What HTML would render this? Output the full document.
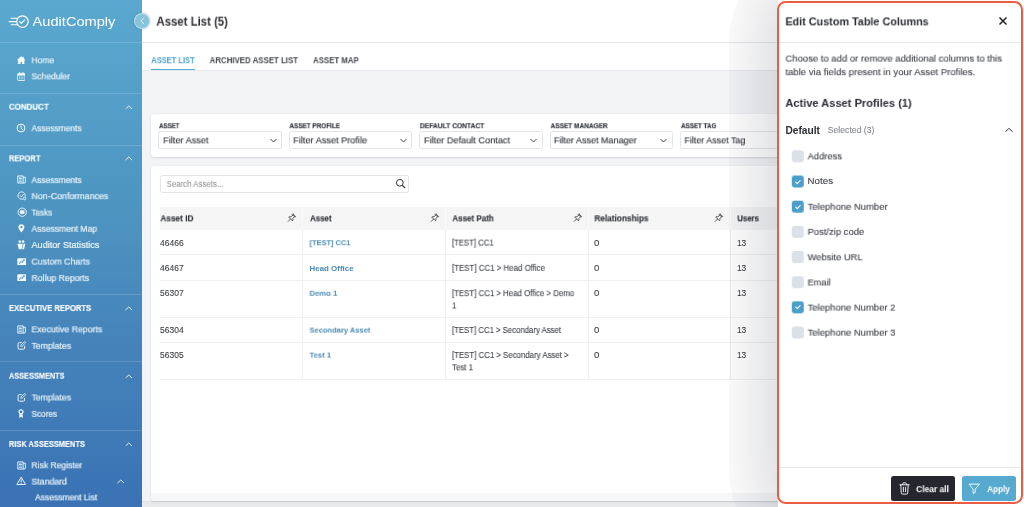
<!DOCTYPE html>
<html lang="en">
<head>
<meta charset="utf-8">
<title>Asset List</title>
<style>
*{box-sizing:border-box;margin:0;padding:0}
html,body{width:1024px;height:507px;overflow:hidden;background:#f3f4f6;font-family:"Liberation Sans",sans-serif;color:#333}
body{position:relative}
.abs{position:absolute}
.t{position:absolute;white-space:nowrap;transform-origin:0 50%;will-change:transform}
#side{position:absolute;left:0;top:0;width:142px;height:507px;background:linear-gradient(180deg,#5aa8cf 0%,#4d94c1 42%,#4583ba 68%,#3a72b4 100%)}
.hr{position:absolute;left:0;width:142px;height:1px;background:rgba(255,255,255,.15)}
.logo{font-size:13.6px;line-height:18px;color:#fff}
.it{font-size:9.1px;font-weight:normal;-webkit-text-stroke:0.22px #e9f3f9;line-height:12px;color:#e9f3f9}
.hd{font-size:8.7px;font-weight:bold;-webkit-text-stroke:0.15px #fff;line-height:10px;color:#fdfeff}
#top{position:absolute;left:142px;top:0;width:882px;height:43px;background:#fff;border-bottom:1px solid #e3e8ee}
.title{font-size:12.3px;font-weight:bold;line-height:16px;color:#2e2e33}
#tabs{position:absolute;left:142px;top:43px;width:882px;height:28px;background:#fff;border-bottom:1px solid #e6eaef}
.tab{font-size:8.5px;font-weight:bold;line-height:10px;color:#43464c}
.tab.on{color:#4a9fd0}
.card{position:absolute;background:#fff;border-radius:3px;box-shadow:0 1px 2px rgba(40,50,70,.13),0 0 1px rgba(40,50,70,.12)}
.fl{font-size:7.3px;font-weight:bold;line-height:8px;color:#33363c;-webkit-text-stroke:.15px #33363c}
.selbox{position:absolute;top:131px;height:17.5px;border:1px solid #e2e5ea;border-radius:2.5px;background:#fff}
.st{font-size:9.3px;line-height:12px;color:#303338;-webkit-text-stroke:.12px #303338}
.sr{font-size:8.45px;line-height:12px;color:#85888f}
.th{font-size:8.4px;font-weight:bold;line-height:12px;color:#2f3237;-webkit-text-stroke:.12px #2f3237}
.td{font-size:8.25px;line-height:12px;color:#3c3f45;-webkit-text-stroke:.1px #3c3f45}
.td.lk{-webkit-text-stroke:0;color:#4a8bb3;font-weight:bold;font-size:7.9px}
.rowline{position:absolute;left:160px;width:640px;height:1px;background:#eef0f2}
.colline{position:absolute;top:229px;width:1px;height:150px;background:#eff0f2}
.colh{position:absolute;top:207px;width:1px;height:22px;background:#fbfbfc}
#pclip{position:absolute;left:729px;top:0;width:295px;height:507px;overflow:hidden;clip-path:path('M7 507 C2.5 497 0 485 0 470 L0 46 C0 28 3.5 12 9.5 0 L295 0 L295 507 Z')}
#pbg{position:absolute;left:49px;top:-22px;width:300px;height:555px;background:#fff;box-shadow:0 0 80px rgba(10,14,28,.235)}
#panel{position:absolute;left:777px;top:1px;width:246px;height:503px;border:2px solid #ea5d43;border-radius:8.5px}
.pt{font-size:11.8px;font-weight:bold;line-height:14px;color:#2b2d33}
.pd{font-size:9.7px;line-height:12px;color:#3f4248;-webkit-text-stroke:.12px #3f4248}
.ph{font-size:11.6px;font-weight:bold;line-height:14px;color:#2b2d33}
.pdf{font-size:10px;font-weight:bold;line-height:12px;color:#2b2d33}
.psel{font-size:8.4px;line-height:10px;color:#84878d;-webkit-text-stroke:.1px #84878d}
.cb{position:absolute;left:791px;width:12px;height:12px;border-radius:2.4px;background:#dce1e9;will-change:transform}
.cb.on{background:#4b9fca}
.cl{font-size:9.56px;line-height:12px;color:#3a3d43;-webkit-text-stroke:.1px #3a3d43}
.bt{font-size:9px;font-weight:bold;line-height:12px;color:#fff}
</style>
</head>
<body>
<!-- main header -->
<div id="top"></div>
<div id="tabs"></div>
<div class="abs" style="left:151px;top:68.8px;width:44px;height:1.6px;background:#55a7d4"></div>

<!-- filter card -->
<div class="card" style="left:151px;top:114px;width:720px;height:43px"></div>
<div class="selbox" style="left:158px;width:124px"></div>
<div class="selbox" style="left:289px;width:123px"></div>
<div class="selbox" style="left:419px;width:124px"></div>
<div class="selbox" style="left:550px;width:123px"></div>
<div class="selbox" style="left:680px;width:124px"></div>
<svg class="abs" style="left:268.5px;top:137px" width="9" height="7" viewBox="0 0 9 7"><path d="M1.5 2 L4.5 5 L7.5 2" fill="none" stroke="#444" stroke-width="1"/></svg>
<svg class="abs" style="left:398.8px;top:137px" width="9" height="7" viewBox="0 0 9 7"><path d="M1.5 2 L4.5 5 L7.5 2" fill="none" stroke="#444" stroke-width="1"/></svg>
<svg class="abs" style="left:529.2px;top:137px" width="9" height="7" viewBox="0 0 9 7"><path d="M1.5 2 L4.5 5 L7.5 2" fill="none" stroke="#444" stroke-width="1"/></svg>
<svg class="abs" style="left:659.4px;top:137px" width="9" height="7" viewBox="0 0 9 7"><path d="M1.5 2 L4.5 5 L7.5 2" fill="none" stroke="#444" stroke-width="1"/></svg>

<!-- table card -->
<div class="abs" style="left:142px;top:501px;width:700px;height:6px;background:#e9eaec;border-top:1px solid #e1e2e5"></div>
<div class="card" style="left:151px;top:165.5px;width:720px;height:335.3px;overflow:hidden"><div class="abs" style="left:0;top:327.5px;width:720px;height:8px;background:#f6f7f8"></div></div>
<div class="abs" style="left:160px;top:174.5px;width:249px;height:18px;border:1px solid #e2e5ea;border-radius:2.5px;background:#fff"></div>
<svg class="abs" style="left:395px;top:177.6px" width="11" height="11" viewBox="0 0 11 11"><circle cx="4.8" cy="4.8" r="3.4" fill="none" stroke="#333" stroke-width="1"/><path d="M7.3 7.3 L10 10" stroke="#333" stroke-width="1.1"/></svg>

<div class="abs" style="left:160px;top:207px;width:640px;height:22.5px;background:#f5f5f6"></div>
<div class="colh" style="left:302px"></div><div class="colline" style="left:302px"></div>
<div class="colh" style="left:445px"></div><div class="colline" style="left:445px"></div>
<div class="colh" style="left:588px"></div><div class="colline" style="left:588px"></div>
<div class="colh" style="left:730px"></div><div class="colline" style="left:730px"></div>
<div class="rowline" style="top:254px"></div>
<div class="rowline" style="top:280px"></div>
<div class="rowline" style="top:317px"></div>
<div class="rowline" style="top:342px"></div>
<div class="rowline" style="top:379px"></div>

<!-- sidebar -->
<div id="side">
  <div class="hr" style="top:42px"></div>
  <div class="hr" style="top:93px"></div>
  <div class="hr" style="top:145px"></div>
  <div class="hr" style="top:294px"></div>
  <div class="hr" style="top:361px"></div>
  <div class="hr" style="top:430px"></div>
</div>
<svg class="abs" style="left:8px;top:14px" width="24" height="16" viewBox="0 0 24 16"><circle cx="14.45" cy="7.55" r="5.75" fill="none" stroke="#fff" stroke-width="1.15"/><path d="M11.7 7.7 L13.3 9.3 L16.6 5.8" fill="none" stroke="#fff" stroke-width="1.1" stroke-linecap="round" stroke-linejoin="round"/><path d="M3.2 4.3 H9.2 M1.2 7.6 H8.4 M3.2 10.7 H9.2" stroke="#fff" stroke-width="1.1" stroke-linecap="round"/></svg>
<svg class="abs" style="left:17.2px;top:55.7px" width="8.4" height="8.8" viewBox="0 0 16 17" ><path d="M8 0.5 L0.2 7.9 L2.1 7.9 L2.1 16.5 L6.3 16.5 L6.3 11 L9.7 11 L9.7 16.5 L13.9 16.5 L13.9 7.9 L15.8 7.9 L13.1 5.3 L13.1 1.8 L11.2 1.8 L11.2 3.5 Z" fill="#f4f9fc" stroke="#f4f9fc" stroke-width="0.6" stroke-linejoin="round"/></svg>
<svg class="abs" style="left:16.9px;top:71.9px" width="8.6" height="9.2" viewBox="0 0 17 18" ><rect x="1.2" y="2.8" width="14.6" height="14" rx="2" fill="none" stroke="#f4f9fc" stroke-width="1.7"/><path d="M1.2 3.6 h14.6 v3.2 h-14.6z" fill="#f4f9fc"/><path d="M5 0.8 v3 M12 0.8 v3" stroke="#f4f9fc" stroke-width="1.8" stroke-linecap="round"/><path d="M4 9h2.4v2h-2.4z M7.3 9h2.4v2h-2.4z M10.6 9h2.4v2h-2.4z M4 12.2h2.4v2h-2.4z M7.3 12.2h2.4v2h-2.4z M10.6 12.2h2.4v2h-2.4z" fill="#f4f9fc" opacity=".7"/></svg>
<svg class="abs" style="left:16.4px;top:122.9px" width="10" height="10" viewBox="0 0 20 20" ><circle cx="10" cy="10" r="7.9" fill="none" stroke="#f4f9fc" stroke-width="2"/><path d="M10 5.2 V10.4 L13 13.2" fill="none" stroke="#f4f9fc" stroke-width="1.9" stroke-linecap="round" stroke-linejoin="round"/></svg>
<svg class="abs" style="left:16.5px;top:175.1px" width="9.4" height="9" viewBox="0 0 19 18" ><path d="M1.6 1.8 h10.8 v14.4 h-10.8z" fill="none" stroke="#f4f9fc" stroke-width="1.9" stroke-linejoin="round"/><path d="M12.4 4.4 h4.6 v9.6 a2.2 2.2 0 0 1 -2.2 2.2 h-2.4" fill="none" stroke="#f4f9fc" stroke-width="1.9" stroke-linejoin="round"/><path d="M4.2 5.2h5.6v2.6h-5.6z" fill="#f4f9fc"/><path d="M4.2 10.2h5.6 M4.2 13h5.6" stroke="#f4f9fc" stroke-width="1.5"/></svg>
<svg class="abs" style="left:16.6px;top:191.0px" width="10" height="10" viewBox="0 0 20 20" ><path d="M16.6 10.4 A7.4 7.4 0 1 0 10.6 16.4" fill="none" stroke="#f4f9fc" stroke-width="1.8" stroke-linecap="round"/><path d="M6.2 9.2 L8.8 11.8 L13 6.8" fill="none" stroke="#f4f9fc" stroke-width="1.8" stroke-linecap="round" stroke-linejoin="round"/><circle cx="15.2" cy="15" r="2.6" fill="none" stroke="#f4f9fc" stroke-width="1.7"/></svg>
<svg class="abs" style="left:16.8px;top:207.1px" width="10.4" height="10.4" viewBox="0 0 20 20" ><circle cx="10" cy="10" r="8" fill="none" stroke="#f4f9fc" stroke-width="1.8"/><rect x="5.6" y="6.4" width="8.8" height="7.2" rx="1.2" fill="#f4f9fc" opacity=".9"/></svg>
<svg class="abs" style="left:18.0px;top:224.4px" width="6.8" height="8.8" viewBox="0 0 13 17" ><path d="M6.5 0.6 C3.1 0.6 0.7 3.1 0.7 6.3 C0.7 10 6.5 16.4 6.5 16.4 C6.5 16.4 12.3 10 12.3 6.3 C12.3 3.1 9.9 0.6 6.5 0.6 Z M6.5 4.1 a2.1 2.1 0 1 1 0 4.2 a2.1 2.1 0 1 1 0 -4.2z" fill="#f4f9fc" fill-rule="evenodd"/></svg>
<svg class="abs" style="left:17.1px;top:240.2px" width="8.6" height="9.6" viewBox="0 0 17 19" ><circle cx="5.4" cy="3.2" r="2.5" fill="#f4f9fc"/><circle cx="12" cy="3.2" r="2.5" fill="#f4f9fc"/><path d="M0.6 7.6 H11.6 L9.2 17.6 Q9 18.2 8.4 18.2 H4.4 Q3.8 18.2 3.6 17.6 Z" fill="#f4f9fc"/><path d="M13 7.6 H16.6 L14 17.6 Q13.8 18.2 13.2 18.2 H10.4 Z" fill="#f4f9fc"/></svg>
<svg class="abs" style="left:16.6px;top:257.7px" width="9.6" height="7.6" viewBox="0 0 19 15" ><path d="M2.4 0.6 h14.2 a1.8 1.8 0 0 1 1.8 1.8 v10.2 a1.8 1.8 0 0 1 -1.8 1.8 h-14.2 a1.8 1.8 0 0 1 -1.8 -1.8 v-10.2 a1.8 1.8 0 0 1 1.8 -1.8z M3.4 11.2 l1.3 1 l3.1 -4.2 l2.5 1.7 l3.6 -5 l1.4 0.9 v-3.3 h-3.4 l0.9 1.2 l-2.9 4 l-2.5 -1.7z" fill="#f4f9fc" fill-rule="evenodd"/></svg>
<svg class="abs" style="left:16.6px;top:273.9px" width="9.6" height="7.6" viewBox="0 0 19 15" ><path d="M2.4 0.6 h14.2 a1.8 1.8 0 0 1 1.8 1.8 v10.2 a1.8 1.8 0 0 1 -1.8 1.8 h-14.2 a1.8 1.8 0 0 1 -1.8 -1.8 v-10.2 a1.8 1.8 0 0 1 1.8 -1.8z M3.4 11.2 l1.3 1 l3.1 -4.2 l2.5 1.7 l3.6 -5 l1.4 0.9 v-3.3 h-3.4 l0.9 1.2 l-2.9 4 l-2.5 -1.7z" fill="#f4f9fc" fill-rule="evenodd"/></svg>
<svg class="abs" style="left:16.7px;top:324.7px" width="9.4" height="9" viewBox="0 0 19 18" ><path d="M1.6 1.8 h10.8 v14.4 h-10.8z" fill="none" stroke="#f4f9fc" stroke-width="1.9" stroke-linejoin="round"/><path d="M12.4 4.4 h4.6 v9.6 a2.2 2.2 0 0 1 -2.2 2.2 h-2.4" fill="none" stroke="#f4f9fc" stroke-width="1.9" stroke-linejoin="round"/><path d="M4.2 5.2h5.6v2.6h-5.6z" fill="#f4f9fc"/><path d="M4.2 10.2h5.6 M4.2 13h5.6" stroke="#f4f9fc" stroke-width="1.5"/></svg>
<svg class="abs" style="left:17.1px;top:341.1px" width="9.2" height="9" viewBox="0 0 18 18" ><path d="M8.4 3.2 H4.4 a2.4 2.4 0 0 0 -2.4 2.4 v8.4 a2.4 2.4 0 0 0 2.4 2.4 h8.2 a2.4 2.4 0 0 0 2.4 -2.4 V10.4" fill="none" stroke="#f4f9fc" stroke-width="1.9" stroke-linecap="round"/><path d="M7.4 10.8 l0.7 -3 l6.1 -6.1 a1.5 1.5 0 0 1 2.3 2.3 l-6.1 6.1z" fill="none" stroke="#f4f9fc" stroke-width="1.6" stroke-linejoin="round"/></svg>
<svg class="abs" style="left:17.1px;top:392.8px" width="9.2" height="9" viewBox="0 0 18 18" ><path d="M8.4 3.2 H4.4 a2.4 2.4 0 0 0 -2.4 2.4 v8.4 a2.4 2.4 0 0 0 2.4 2.4 h8.2 a2.4 2.4 0 0 0 2.4 -2.4 V10.4" fill="none" stroke="#f4f9fc" stroke-width="1.9" stroke-linecap="round"/><path d="M7.4 10.8 l0.7 -3 l6.1 -6.1 a1.5 1.5 0 0 1 2.3 2.3 l-6.1 6.1z" fill="none" stroke="#f4f9fc" stroke-width="1.6" stroke-linejoin="round"/></svg>
<svg class="abs" style="left:17.9px;top:408.8px" width="6" height="9.6" viewBox="0 0 12 19" ><circle cx="6" cy="5.6" r="4" fill="none" stroke="#f4f9fc" stroke-width="2.4"/><path d="M2.6 10.4 V18 L6 15.6 L9.4 18 V10.4 Z" fill="#f4f9fc"/></svg>
<svg class="abs" style="left:16.7px;top:460.7px" width="9.4" height="9" viewBox="0 0 19 18" ><path d="M1.6 1.8 h10.8 v14.4 h-10.8z" fill="none" stroke="#f4f9fc" stroke-width="1.9" stroke-linejoin="round"/><path d="M12.4 4.4 h4.6 v9.6 a2.2 2.2 0 0 1 -2.2 2.2 h-2.4" fill="none" stroke="#f4f9fc" stroke-width="1.9" stroke-linejoin="round"/><path d="M4.2 5.2h5.6v2.6h-5.6z" fill="#f4f9fc"/><path d="M4.2 10.2h5.6 M4.2 13h5.6" stroke="#f4f9fc" stroke-width="1.5"/></svg>
<svg class="abs" style="left:16.3px;top:476.4px" width="10.4" height="9.6" viewBox="0 0 21 19" ><path d="M10.5 2 L19.2 17 H1.8 Z" fill="none" stroke="#f4f9fc" stroke-width="1.9" stroke-linejoin="round"/><path d="M10.5 7.4 v4.6" stroke="#f4f9fc" stroke-width="1.9" stroke-linecap="round"/><circle cx="10.5" cy="14.4" r="1.1" fill="#f4f9fc"/></svg>
<svg class="abs" style="left:125.2px;top:104.6px" width="7.6" height="4.75" viewBox="0 0 16 10" ><path d="M1.6 8.2 L8 2 L14.4 8.2" fill="none" stroke="#f4f9fc" stroke-width="1.9" stroke-linecap="round" stroke-linejoin="round"/></svg>
<svg class="abs" style="left:125.2px;top:156.1px" width="7.6" height="4.75" viewBox="0 0 16 10" ><path d="M1.6 8.2 L8 2 L14.4 8.2" fill="none" stroke="#f4f9fc" stroke-width="1.9" stroke-linecap="round" stroke-linejoin="round"/></svg>
<svg class="abs" style="left:125.2px;top:305.8px" width="7.6" height="4.75" viewBox="0 0 16 10" ><path d="M1.6 8.2 L8 2 L14.4 8.2" fill="none" stroke="#f4f9fc" stroke-width="1.9" stroke-linecap="round" stroke-linejoin="round"/></svg>
<svg class="abs" style="left:125.2px;top:373.6px" width="7.6" height="4.75" viewBox="0 0 16 10" ><path d="M1.6 8.2 L8 2 L14.4 8.2" fill="none" stroke="#f4f9fc" stroke-width="1.9" stroke-linecap="round" stroke-linejoin="round"/></svg>
<svg class="abs" style="left:125.2px;top:441.6px" width="7.6" height="4.75" viewBox="0 0 16 10" ><path d="M1.6 8.2 L8 2 L14.4 8.2" fill="none" stroke="#f4f9fc" stroke-width="1.9" stroke-linecap="round" stroke-linejoin="round"/></svg>
<svg class="abs" style="left:116.5px;top:478.9px" width="7.6" height="4.75" viewBox="0 0 16 10" ><path d="M1.6 8.2 L8 2 L14.4 8.2" fill="none" stroke="#f4f9fc" stroke-width="1.9" stroke-linecap="round" stroke-linejoin="round"/></svg>
<svg class="abs" style="left:286.4px;top:213.2px" width="10.6" height="10.6" viewBox="0 0 20 20" ><g transform="translate(10,10) rotate(45)" fill="none" stroke="#3a3d42" stroke-width="1.5" stroke-linejoin="round" stroke-linecap="round"><path d="M-3.4 -8.2 H3.4 V-6.4 H-3.4 Z"/><path d="M-2.2 -6.4 L-2.6 -1.6 C-4.2 -0.8 -5 0.4 -5 1.8 H5 C5 0.4 4.2 -0.8 2.6 -1.6 L2.2 -6.4"/><path d="M0 1.8 V8.2"/></g></svg>
<svg class="abs" style="left:428.8px;top:213.2px" width="10.6" height="10.6" viewBox="0 0 20 20" ><g transform="translate(10,10) rotate(45)" fill="none" stroke="#3a3d42" stroke-width="1.5" stroke-linejoin="round" stroke-linecap="round"><path d="M-3.4 -8.2 H3.4 V-6.4 H-3.4 Z"/><path d="M-2.2 -6.4 L-2.6 -1.6 C-4.2 -0.8 -5 0.4 -5 1.8 H5 C5 0.4 4.2 -0.8 2.6 -1.6 L2.2 -6.4"/><path d="M0 1.8 V8.2"/></g></svg>
<svg class="abs" style="left:571.8px;top:213.2px" width="10.6" height="10.6" viewBox="0 0 20 20" ><g transform="translate(10,10) rotate(45)" fill="none" stroke="#3a3d42" stroke-width="1.5" stroke-linejoin="round" stroke-linecap="round"><path d="M-3.4 -8.2 H3.4 V-6.4 H-3.4 Z"/><path d="M-2.2 -6.4 L-2.6 -1.6 C-4.2 -0.8 -5 0.4 -5 1.8 H5 C5 0.4 4.2 -0.8 2.6 -1.6 L2.2 -6.4"/><path d="M0 1.8 V8.2"/></g></svg>
<svg class="abs" style="left:713.1px;top:213.2px" width="10.6" height="10.6" viewBox="0 0 20 20" ><g transform="translate(10,10) rotate(45)" fill="none" stroke="#3a3d42" stroke-width="1.5" stroke-linejoin="round" stroke-linecap="round"><path d="M-3.4 -8.2 H3.4 V-6.4 H-3.4 Z"/><path d="M-2.2 -6.4 L-2.6 -1.6 C-4.2 -0.8 -5 0.4 -5 1.8 H5 C5 0.4 4.2 -0.8 2.6 -1.6 L2.2 -6.4"/><path d="M0 1.8 V8.2"/></g></svg>
<div class="t logo" style="left:32px;top:13px;transform:translate(0.60px,0.40px) scaleX(1.074)">AuditComply</div>
<div class="t it" style="left:31px;top:54px;transform:translate(0.50px,0.27px) scaleX(0.935)">Home</div>
<div class="t it" style="left:31px;top:70px;transform:translate(0.50px,0.37px) scaleX(0.940)">Scheduler</div>
<div class="t it" style="left:31px;top:122px;transform:translate(0.50px,0.27px) scaleX(0.926)">Assessments</div>
<div class="t it" style="left:31px;top:174px;transform:translate(0.50px,0.07px) scaleX(0.926)">Assessments</div>
<div class="t it" style="left:31px;top:190px;transform:translate(0.50px,0.17px) scaleX(0.973)">Non-Conformances</div>
<div class="t it" style="left:31px;top:206px;transform:translate(0.50px,0.57px) scaleX(0.882)">Tasks</div>
<div class="t it" style="left:31px;top:222px;transform:translate(0.50px,0.77px) scaleX(0.939)">Assessment Map</div>
<div class="t it" style="left:31px;top:239px;transform:translate(0.50px,0.27px) scaleX(1.002)">Auditor Statistics</div>
<div class="t it" style="left:31px;top:255px;transform:translate(0.50px,0.57px) scaleX(0.964)">Custom Charts</div>
<div class="t it" style="left:31px;top:272px;transform:translate(0.50px,0.07px) scaleX(0.959)">Rollup Reports</div>
<div class="t it" style="left:31px;top:323px;transform:translate(0.50px,0.37px) scaleX(0.958)">Executive Reports</div>
<div class="t it" style="left:31px;top:339px;transform:translate(0.50px,0.87px) scaleX(0.953)">Templates</div>
<div class="t it" style="left:31px;top:391px;transform:translate(0.50px,0.47px) scaleX(0.953)">Templates</div>
<div class="t it" style="left:31px;top:407px;transform:translate(0.50px,0.87px) scaleX(0.901)">Scores</div>
<div class="t it" style="left:31px;top:459px;transform:translate(0.50px,0.27px) scaleX(0.939)">Risk Register</div>
<div class="t it" style="left:31px;top:475px;transform:translate(0.50px,0.57px) scaleX(0.959)">Standard</div>
<div class="t it" style="left:35px;top:491px;transform:translate(0.00px,0.37px) scaleX(0.938)">Assessment List</div>
<div class="t hd" style="left:8px;top:101px;transform:translate(0.90px,0.75px) scaleX(0.916)">CONDUCT</div>
<div class="t hd" style="left:8px;top:153px;transform:translate(0.90px,0.35px) scaleX(0.870)">REPORT</div>
<div class="t hd" style="left:9px;top:303px;transform:translate(0.00px,0.05px) scaleX(0.877)">EXECUTIVE REPORTS</div>
<div class="t hd" style="left:9px;top:370px;transform:translate(0.00px,0.75px) scaleX(0.847)">ASSESSMENTS</div>
<div class="t hd" style="left:8px;top:438px;transform:translate(0.90px,0.95px) scaleX(0.859)">RISK ASSESSMENTS</div>
<div class="t title" style="left:156px;top:13px;transform:translate(0.40px,0.65px) scaleX(0.926)">Asset List (5)</div>
<div class="t tab on" style="left:151px;top:55px;transform:translate(0.20px,0.25px) scaleX(0.883)">ASSET LIST</div>
<div class="t tab" style="left:209px;top:55px;transform:translate(0.60px,0.25px) scaleX(0.925)">ARCHIVED ASSET LIST</div>
<div class="t tab" style="left:313px;top:55px;transform:translate(0.00px,0.25px) scaleX(0.921)">ASSET MAP</div>
<div class="t fl" style="left:159px;top:122px;transform:translate(0.00px,0.20px) scaleX(0.839)">ASSET</div>
<div class="t fl" style="left:289px;top:122px;transform:translate(0.40px,0.20px) scaleX(0.873)">ASSET PROFILE</div>
<div class="t fl" style="left:419px;top:122px;transform:translate(0.80px,0.20px) scaleX(0.919)">DEFAULT CONTACT</div>
<div class="t fl" style="left:550px;top:122px;transform:translate(0.60px,0.20px) scaleX(0.890)">ASSET MANAGER</div>
<div class="t fl" style="left:681px;top:122px;transform:translate(0.00px,0.20px) scaleX(0.859)">ASSET TAG</div>
<div class="t st" style="left:163px;top:134px;transform:translate(0.15px,0.37px) scaleX(0.984)">Filter Asset</div>
<div class="t st" style="left:293px;top:134px;transform:translate(0.15px,0.37px) scaleX(0.988)">Filter Asset Profile</div>
<div class="t st" style="left:423px;top:134px;transform:translate(0.90px,0.37px) scaleX(0.986)">Filter Default Contact</div>
<div class="t st" style="left:553px;top:134px;transform:translate(0.90px,0.37px) scaleX(0.970)">Filter Asset Manager</div>
<div class="t st" style="left:684px;top:134px;transform:translate(0.40px,0.37px) scaleX(0.961)">Filter Asset Tag</div>
<div class="t sr" style="left:166px;top:177px;transform:translate(0.60px,0.82px) scaleX(0.932)">Search Assets...</div>
<div class="t th" style="left:160px;top:212px;transform:translate(0.40px,0.36px) scaleX(0.985)">Asset ID</div>
<div class="t th" style="left:310px;top:212px;transform:translate(0.10px,0.36px) scaleX(0.942)">Asset</div>
<div class="t th" style="left:452px;top:212px;transform:translate(0.40px,0.36px) scaleX(0.952)">Asset Path</div>
<div class="t th" style="left:594px;top:212px;transform:translate(0.40px,0.36px) scaleX(0.983)">Relationships</div>
<div class="t th" style="left:737px;top:212px;transform:translate(0.30px,0.36px) scaleX(0.932)">Users</div>
<div class="t td" style="left:160px;top:237px;transform:translate(0.10px,0.57px) scaleX(1.028)">46466</div>
<div class="t td lk" style="left:309px;top:237px;transform:translate(0.50px,0.20px) scaleX(0.942)">[TEST] CC1</div>
<div class="t td" style="left:452px;top:237px;transform:translate(0.00px,0.57px) scaleX(0.935)">[TEST] CC1</div>
<div class="t td" style="left:594px;top:237px;transform:translate(0.00px,0.57px) scaleX(1.154)">0</div>
<div class="t td" style="left:736px;top:237px;transform:translate(0.90px,0.57px) scaleX(1.023)">13</div>
<div class="t td" style="left:160px;top:262px;transform:translate(0.10px,0.87px) scaleX(1.028)">46467</div>
<div class="t td lk" style="left:309px;top:262px;transform:translate(0.50px,0.50px) scaleX(1.005)">Head Office</div>
<div class="t td" style="left:452px;top:262px;transform:translate(0.00px,0.87px) scaleX(0.956)">[TEST] CC1 &gt; Head Office</div>
<div class="t td" style="left:594px;top:262px;transform:translate(0.00px,0.87px) scaleX(1.154)">0</div>
<div class="t td" style="left:736px;top:262px;transform:translate(0.90px,0.87px) scaleX(1.023)">13</div>
<div class="t td" style="left:160px;top:288px;transform:translate(0.10px,0.17px) scaleX(1.028)">56307</div>
<div class="t td lk" style="left:309px;top:287px;transform:translate(0.50px,0.80px) scaleX(0.982)">Demo 1</div>
<div class="t td" style="left:452px;top:288px;transform:translate(0.00px,0.17px) scaleX(0.949)">[TEST] CC1 &gt; Head Office &gt; Demo</div>
<div class="t td" style="left:452px;top:300px;transform:translate(0.00px,0.47px) scaleX(0.936)">1</div>
<div class="t td" style="left:594px;top:288px;transform:translate(0.00px,0.17px) scaleX(1.154)">0</div>
<div class="t td" style="left:736px;top:288px;transform:translate(0.90px,0.17px) scaleX(1.023)">13</div>
<div class="t td" style="left:160px;top:324px;transform:translate(0.10px,0.97px) scaleX(1.028)">56304</div>
<div class="t td lk" style="left:309px;top:324px;transform:translate(0.50px,0.60px) scaleX(0.954)">Secondary Asset</div>
<div class="t td" style="left:452px;top:324px;transform:translate(0.00px,0.97px) scaleX(0.941)">[TEST] CC1 &gt; Secondary Asset</div>
<div class="t td" style="left:594px;top:324px;transform:translate(0.00px,0.97px) scaleX(1.154)">0</div>
<div class="t td" style="left:736px;top:324px;transform:translate(0.90px,0.97px) scaleX(1.023)">13</div>
<div class="t td" style="left:160px;top:349px;transform:translate(0.10px,0.97px) scaleX(1.028)">56305</div>
<div class="t td lk" style="left:309px;top:349px;transform:translate(0.50px,0.60px) scaleX(0.977)">Test 1</div>
<div class="t td" style="left:452px;top:349px;transform:translate(0.00px,0.97px) scaleX(0.949)">[TEST] CC1 &gt; Secondary Asset &gt;</div>
<div class="t td" style="left:452px;top:362px;transform:translate(0.00px,0.27px) scaleX(0.954)">Test 1</div>
<div class="t td" style="left:594px;top:349px;transform:translate(0.00px,0.97px) scaleX(1.154)">0</div>
<div class="t td" style="left:736px;top:349px;transform:translate(0.90px,0.97px) scaleX(1.023)">13</div>
<!-- collapse button -->
<div class="abs" style="left:134.2px;top:13.1px;width:15.7px;height:15.7px;border-radius:50%;background:#86c3dd;border:1px solid rgba(255,255,255,.45);box-shadow:0 0 3px rgba(0,0,0,.18)"></div>
<svg class="abs" style="left:138px;top:16.8px" width="8" height="8" viewBox="0 0 8 8"><path d="M5.8 1.1 L2.9 4 L5.8 6.9" fill="none" stroke="#f2f9fc" stroke-width="0.9" stroke-linecap="round" stroke-linejoin="round"/></svg>

<!-- right panel -->
<div id="pclip"><div id="pbg"></div></div>
<div id="panel"></div>
<svg class="abs" style="left:998.1px;top:16px" width="10" height="10" viewBox="0 0 10 10"><path d="M1.5 1.5 L8.5 8.5 M8.5 1.5 L1.5 8.5" stroke="#222" stroke-width="1.5"/></svg>
<div class="abs" style="left:779px;top:42px;width:242px;height:1px;background:#e6e9ed"></div>
<svg class="abs" style="left:1003.5px;top:125.5px" width="10" height="8" viewBox="0 0 10 8"><path d="M1.5 5.8 L5 2.3 L8.5 5.8" fill="none" stroke="#333" stroke-width="1"/></svg>
<div class="abs" style="left:779px;top:467px;width:242px;height:1px;background:#e6e9ed"></div>
<div class="abs" style="left:891.2px;top:476.4px;width:63.6px;height:24.7px;border-radius:2.5px;background:#26272e"></div>
<div class="abs" style="left:962px;top:476.4px;width:53.8px;height:24.7px;border-radius:2.5px;background:#58a9cf"></div>
<div class="cb" style="top:150px;transform:translate(0.8px,0.35px)"></div>
<div class="cb on" style="top:175px;transform:translate(0.8px,0.52px)"></div>
<div class="cb on" style="top:200px;transform:translate(0.8px,0.69px)"></div>
<div class="cb" style="top:225px;transform:translate(0.8px,0.86px)"></div>
<div class="cb" style="top:251px;transform:translate(0.8px,0.03px)"></div>
<div class="cb" style="top:276px;transform:translate(0.8px,0.20px)"></div>
<div class="cb on" style="top:301px;transform:translate(0.8px,0.37px)"></div>
<div class="cb" style="top:326px;transform:translate(0.8px,0.54px)"></div>
<svg class="abs" style="left:793.8px;top:177.6px" width="8" height="8" viewBox="0 0 16 16" ><path d="M3.6 8.4 L6.6 11.4 L12.4 5" fill="none" stroke="#fff" stroke-width="2.2" stroke-linecap="round" stroke-linejoin="round"/></svg>
<svg class="abs" style="left:793.8px;top:202.7px" width="8" height="8" viewBox="0 0 16 16" ><path d="M3.6 8.4 L6.6 11.4 L12.4 5" fill="none" stroke="#fff" stroke-width="2.2" stroke-linecap="round" stroke-linejoin="round"/></svg>
<svg class="abs" style="left:793.8px;top:303.4px" width="8" height="8" viewBox="0 0 16 16" ><path d="M3.6 8.4 L6.6 11.4 L12.4 5" fill="none" stroke="#fff" stroke-width="2.2" stroke-linecap="round" stroke-linejoin="round"/></svg>
<svg class="abs" style="left:898.5px;top:482.1px" width="11" height="13" viewBox="0 0 22 26" ><g fill="none" stroke="#fff" stroke-width="1.8" stroke-linecap="round" stroke-linejoin="round"><path d="M1.6 5.6 H20.4"/><path d="M7.4 5.4 V3.4 a1.8 1.8 0 0 1 1.8 -1.8 h3.6 a1.8 1.8 0 0 1 1.8 1.8 V5.4"/><path d="M3.6 5.8 L4.6 22 a2.4 2.4 0 0 0 2.4 2.2 h8 a2.4 2.4 0 0 0 2.4 -2.2 L18.4 5.8"/><path d="M8.8 10.4 V19.4 M13.2 10.4 V19.4"/></g></svg>
<svg class="abs" style="left:968.0px;top:482.9px" width="12.4" height="11.6" viewBox="0 0 25 23" ><path d="M2 2 H23 L14.6 12.2 V18.6 L10.4 21.2 V12.2 Z" fill="none" stroke="#fff" stroke-width="1.8" stroke-linejoin="round"/></svg>
<div class="t pt" style="left:785px;top:14px;transform:translate(0.40px,0.34px) scaleX(0.916)">Edit Custom Table Columns</div>
<div class="t pd" style="left:785px;top:52px;transform:translate(0.40px,0.57px) scaleX(0.981)">Choose to add or remove additional columns to this</div>
<div class="t pd" style="left:785px;top:66px;transform:translate(0.40px,0.17px) scaleX(0.988)">table via fields present in your Asset Profiles.</div>
<div class="t ph" style="left:785px;top:95px;transform:translate(0.40px,0.84px) scaleX(0.954)">Active Asset Profiles (1)</div>
<div class="t pdf" style="left:785px;top:124px;transform:translate(0.40px,0.64px) scaleX(1.020)">Default</div>
<div class="t psel" style="left:827px;top:124px;transform:translate(0.80px,0.97px) scaleX(1.032)">Selected (3)</div>
<div class="t cl" style="left:807px;top:150px;transform:translate(0.60px,0.37px) scaleX(0.982)">Address</div>
<div class="t cl" style="left:807px;top:175px;transform:translate(0.60px,0.47px) scaleX(1.018)">Notes</div>
<div class="t cl" style="left:807px;top:200px;transform:translate(0.60px,0.77px) scaleX(0.993)">Telephone Number</div>
<div class="t cl" style="left:807px;top:225px;transform:translate(0.60px,0.87px) scaleX(0.987)">Post/zip code</div>
<div class="t cl" style="left:807px;top:251px;transform:translate(0.60px,0.27px) scaleX(0.981)">Website URL</div>
<div class="t cl" style="left:807px;top:276px;transform:translate(0.60px,0.47px) scaleX(0.963)">Email</div>
<div class="t cl" style="left:807px;top:301px;transform:translate(0.60px,0.57px) scaleX(0.991)">Telephone Number 2</div>
<div class="t cl" style="left:807px;top:326px;transform:translate(0.60px,0.67px) scaleX(0.991)">Telephone Number 3</div>
<div class="t bt" style="left:916px;top:483px;transform:translate(0.10px,0.15px) scaleX(0.936)">Clear all</div>
<div class="t bt" style="left:987px;top:483px;transform:translate(0.20px,0.15px) scaleX(0.907)">Apply</div>
</body>
</html>
